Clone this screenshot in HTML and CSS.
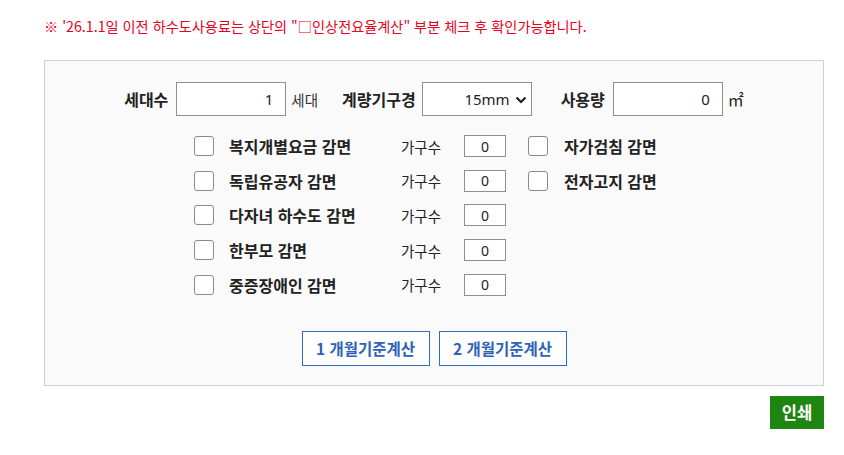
FILE: index.html
```html
<!DOCTYPE html>
<html lang="ko">
<head>
<meta charset="utf-8">
<link rel="stylesheet" href="styles.css">
</head>
<body>
<div class="page">
  <p class="notice">※ '26.1.1일 이전 하수도사용료는 상단의 "□인상전요율계산" 부분 체크 후 확인가능합니다.</p>
  <div class="panel">
    <div class="top-row">
      <span class="field-label">세대수</span>
      <input class="num-input" type="text" value="1">
      <span class="unit">세대</span>
      <span class="field-label gap-left">계량기구경</span>
      <span class="select-wrap">
        <select class="meter-select"><option>15mm</option></select>
        <svg class="chev" width="12" height="8" viewBox="0 0 12 8"><path d="M1.5 1.5 L6 6 L10.5 1.5" fill="none" stroke="#222" stroke-width="2.2"/></svg>
      </span>
      <span class="field-label gap-left2">사용량</span>
      <input class="num-input" type="text" value="0">
      <span class="unit unit-m2">㎡</span>
    </div>

    <div class="options">
      <label class="chk"><input type="checkbox"></label>
      <span class="opt-label">복지개별요금 감면</span>
      <span class="cnt-label">가구수</span>
      <input class="cnt-input" type="text" value="0">
      <label class="chk"><input type="checkbox"></label>
      <span class="opt-label">자가검침 감면</span>

      <label class="chk"><input type="checkbox"></label>
      <span class="opt-label">독립유공자 감면</span>
      <span class="cnt-label">가구수</span>
      <input class="cnt-input" type="text" value="0">
      <label class="chk"><input type="checkbox"></label>
      <span class="opt-label">전자고지 감면</span>

      <label class="chk"><input type="checkbox"></label>
      <span class="opt-label">다자녀 하수도 감면</span>
      <span class="cnt-label">가구수</span>
      <input class="cnt-input" type="text" value="0">
      <span></span><span></span>

      <label class="chk"><input type="checkbox"></label>
      <span class="opt-label">한부모 감면</span>
      <span class="cnt-label">가구수</span>
      <input class="cnt-input" type="text" value="0">
      <span></span><span></span>

      <label class="chk"><input type="checkbox"></label>
      <span class="opt-label">중증장애인 감면</span>
      <span class="cnt-label">가구수</span>
      <input class="cnt-input" type="text" value="0">
      <span></span><span></span>
    </div>

    <div class="buttons">
      <button class="calc-btn">1 개월기준계산</button>
      <button class="calc-btn">2 개월기준계산</button>
    </div>
  </div>
  <div class="print-row">
    <button class="print-btn">인쇄</button>
  </div>
</div>
</body>
</html>
```

FILE: styles.css
```css
* { box-sizing: border-box; }
html, body { margin: 0; padding: 0; background: #fff; }
body {
  font-family: "Noto Sans CJK KR", "Noto Sans", sans-serif;
  color: #222;
}
.page {
  width: 780px;
  margin-left: 44px;
}
.notice {
  margin: 0;
  padding-top: 15px;
  height: 60px;
  line-height: 22px;
  font-size: 14.2px;
  color: #e8001c;
}
.panel {
  border: 1px solid #cfcfcf;
  background: #fafafa;
  padding: 20px 0 19px;
}
.top-row {
  display: flex;
  align-items: center;
  justify-content: center;
  height: 36px;
}
.field-label {
  font-weight: bold;
  font-size: 16px;
  margin-right: 8px;
}
.gap-left { margin-left: 24px; margin-right: 6px; }
.gap-left2 { margin-left: 29px; margin-right: 8px; }
.num-input {
  width: 110px;
  height: 34px;
  border: 1px solid #8f8f8f;
  background: #fff;
  text-align: right;
  padding: 0 12px 0 4px;
  font-family: "Noto Sans", sans-serif;
  font-size: 15px;
  color: #222;
  outline: none;
}
.unit {
  font-size: 14.5px;
  color: #333;
  margin-left: 5px;
}
.unit-m2 {
  font-size: 16px;
  color: #222;
}
.select-wrap {
  position: relative;
  display: inline-block;
  width: 110px;
  height: 34px;
}
.meter-select {
  appearance: none;
  -webkit-appearance: none;
  width: 110px;
  height: 34px;
  border: 1px solid #8f8f8f;
  border-radius: 0;
  background: #fff;
  padding: 0 21px 0 4px;
  text-align: right;
  text-align-last: right;
  font-family: "Noto Sans", sans-serif;
  font-size: 15px;
  color: #222;
}
.chev {
  position: absolute;
  right: 5px;
  top: 14px;
  pointer-events: none;
}
.options {
  display: grid;
  grid-template-columns: 35px 172px 63px 64px 36px 110px;
  grid-auto-rows: 34.6px;
  align-items: center;
  margin: 12px 0 0 149px;
  font-size: 14px;
}
.chk { display: flex; align-items: center; }
.chk input {
  appearance: none;
  -webkit-appearance: none;
  margin: 0;
  width: 20px;
  height: 20px;
  border: 1px solid #8a8a8a;
  border-radius: 3px;
  background: #fff;
}
.opt-label {
  font-weight: bold;
  font-size: 16px;
  white-space: nowrap;
}
.cnt-label {
  color: #222;
  font-size: 14.5px;
  white-space: nowrap;
}
.cnt-input {
  width: 42px;
  height: 22px;
  border: 1px solid #8f8f8f;
  background: #fff;
  text-align: center;
  font-family: "Noto Sans", sans-serif;
  font-size: 14px;
  padding: 0;
  color: #222;
}
.buttons {
  display: flex;
  justify-content: center;
  gap: 9px;
  margin-top: 29px;
}
.calc-btn {
  width: 128px;
  height: 35px;
  border: 1px solid #2f6ac4;
  background: #fff;
  color: #2f62b8;
  font-family: "Noto Sans CJK KR", sans-serif;
  font-weight: bold;
  font-size: 15.5px;
  padding: 0;
}
.print-row {
  display: flex;
  justify-content: flex-end;
  margin-top: 10px;
}
.print-btn {
  width: 54px;
  height: 33px;
  border: none;
  background: #1e8510;
  color: #fff;
  font-family: "Noto Sans CJK KR", sans-serif;
  font-weight: bold;
  font-size: 16.5px;
  padding: 0;
}
```
